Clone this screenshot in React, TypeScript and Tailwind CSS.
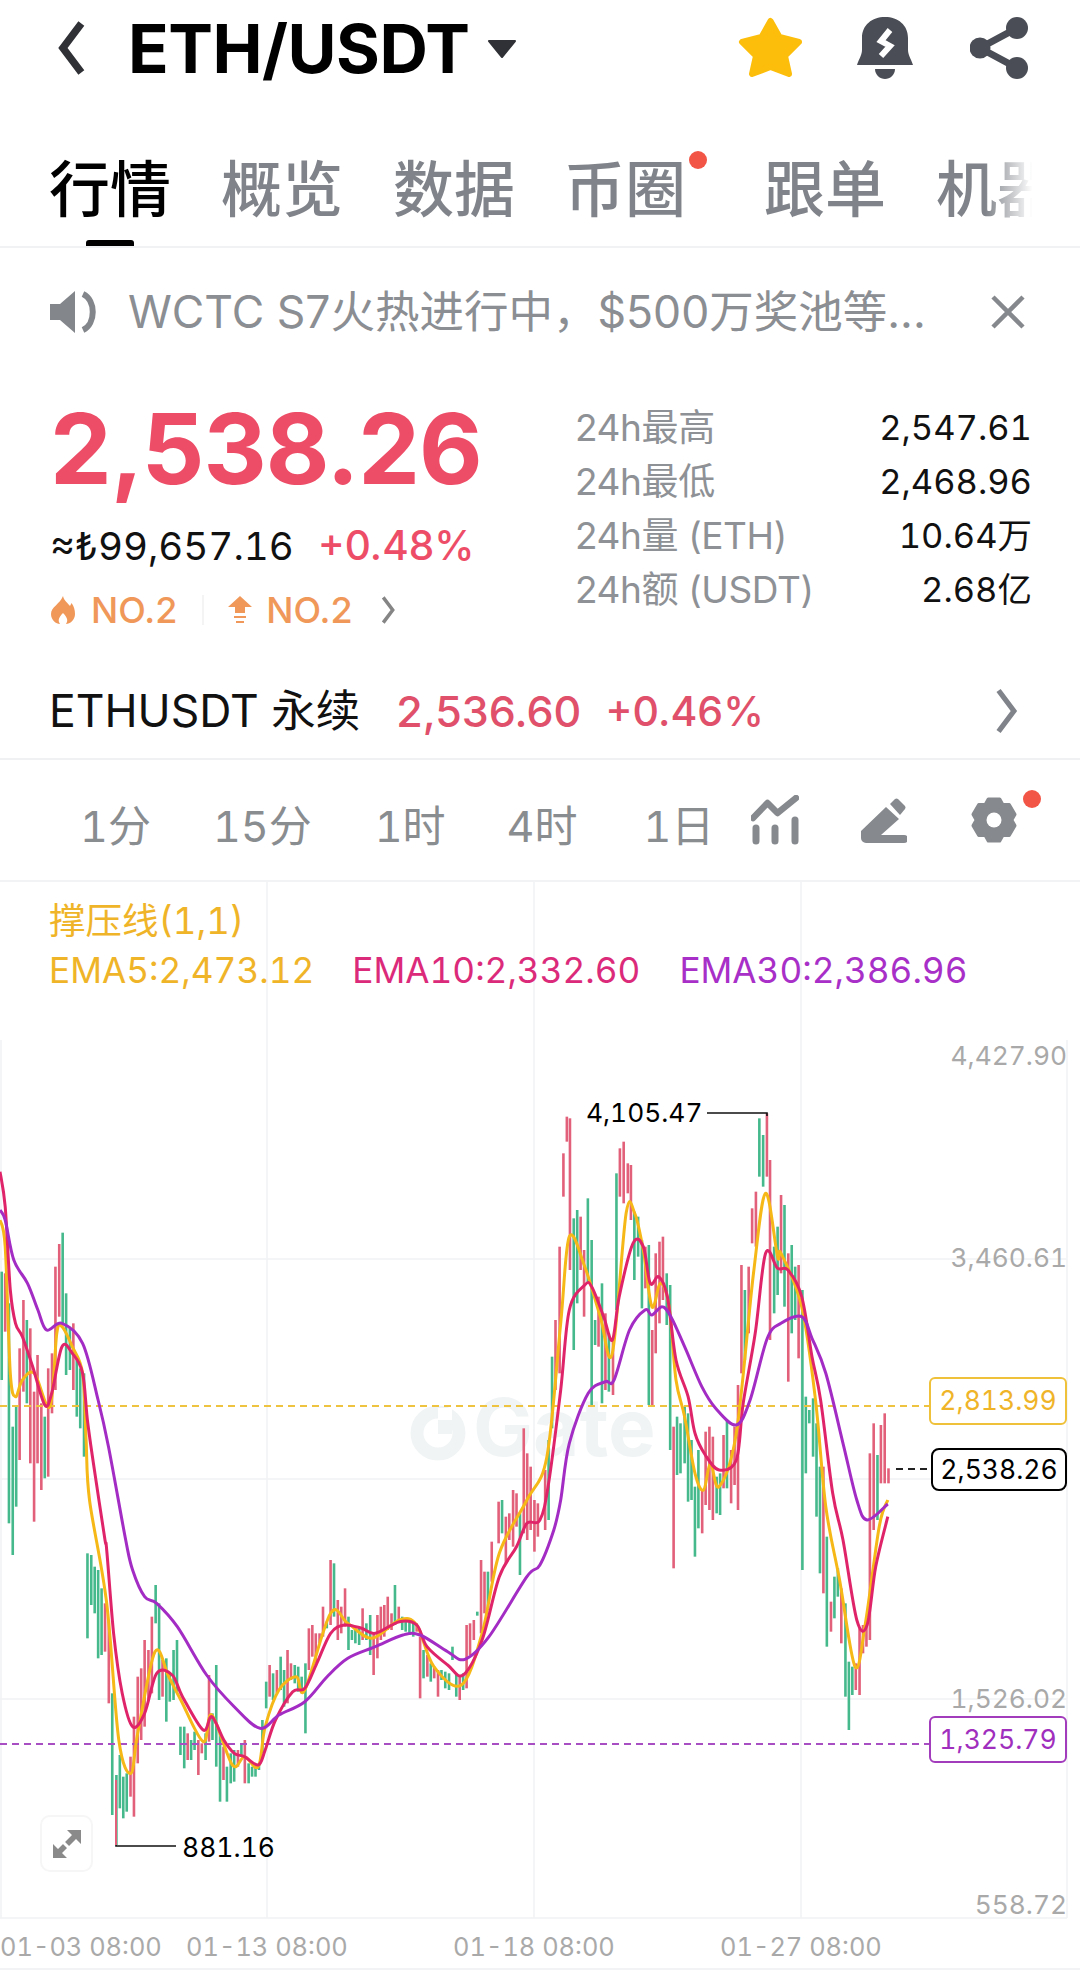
import React from "react";

type P = number[][];
const a = (p: P) => p.map(([x, y]) => [x / 2.904, 1040 + y / 3]);
const b = (p: P) => p.map(([x, y]) => [540 + x / 2.904, 1040 + y / 3]);
const c = (p: P) => p.map(([x, y]) => [x / 2.904, 1500 + y / 3]);
const d = (p: P) => p.map(([x, y]) => [540 + x / 2.904, 1500 + y / 3]);

const magenta = [
  ...a([[0,395],[15,500],[30,750],[45,850],[65,890],[95,980],[130,1095],[150,1060],[180,920],[210,940],[240,1000],[255,1150],[280,1330],[305,1500]]),
  ...c([[310,150],[330,400],[355,580],[385,680],[420,640],[455,520],[500,525],[530,590],[590,690],[615,650],[650,720],[680,760],[710,770],[750,795],[770,750],[800,660],[850,575],[885,565],[920,490],[960,400],[1000,375],[1050,385],[1090,400],[1160,365],[1210,375],[1240,440],[1300,495],[1345,525],[1400,420],[1450,230],[1500,140],[1530,70],[1568,60]]),
  ...b([[25,1330],[60,1050],[85,810],[130,735],[150,740],[185,830],[210,900],[230,770],[270,610],[300,620],[320,730],[345,710],[370,770],[395,960],[430,1070],[450,1180],[480,1245],[520,1290],[570,1260],[590,1090],[625,880],[655,640],[690,685],[720,690],[760,770],[790,950],[815,1080],[850,1360]]),
  ...d([[880,120],[920,360],[950,375],[975,200],[1010,50]]),
];
const purple = [
  ...a([[0,510],[15,540],[40,660],[80,730],[110,810],[135,870],[180,850],[240,910],[285,1080],[315,1220],[365,1500]]),
  ...c([[385,210],[420,290],[455,310],[515,380],[600,525],[680,620],[755,685],[810,645],[885,605],[950,530],[1010,475],[1090,440],[1170,405],[1220,405],[1300,455],[1350,478],[1420,410],[1530,230],[1568,195]]),
  ...d([[40,90],[60,0]]),
  ...b([[85,1210],[140,1060],[190,1025],[215,1020],[260,870],[305,810],[325,825],[355,800],[380,830],[420,920],[470,1040],[510,1105],[570,1155],[610,1080],[660,895],[700,850],[760,830],[790,895],[830,1000],[880,1210],[920,1380],[950,1440],[1010,1392]]),
];
const yellow = [
  ...a([[0,540],[15,620],[30,1000],[45,1070],[65,1020],[100,1000],[145,1100],[165,880],[180,860],[210,920],[240,1000],[250,1200]]),
  ...c([[260,0],[310,310],[345,720],[380,820],[400,700],[450,455],[490,530],[525,600],[590,725],[615,645],[675,795],[710,770],[750,800],[770,680],[810,570],[860,530],[885,570],[960,340],[1010,370],[1080,415],[1160,360],[1210,375],[1260,500],[1340,555],[1400,400],[1450,160],[1530,0]]),
  ...b([[20,1250],[60,850],[85,590],[130,680],[175,830],[210,940],[250,520],[275,520],[300,630],[325,800],[350,730],[375,800],[395,1020],[420,1130],[450,1300],[475,1350],[495,1270],[520,1340],[570,1180],[620,700],[655,460],[690,650],[700,640],[760,800],[800,1080],[830,1400]]),
  ...d([[870,240],[915,500],[945,370],[985,80],[1010,0]]),
];

const tops = [
  ...a([[5,695],[15,700],[26,790],[37,1160],[47,1100],[57,925],[68,780],[78,840],[88,865],[99,1055],[109,945],[120,1090],[130,1130],[140,985],[151,940],[161,680],[172,612],[182,578],[192,760],[203,860],[213,850],[223,950],[233,985],[244,1000]]),
  ...c([[254,160],[265,165],[275,200],[285,210],[295,265],[305,310],[316,360],[326,580],[338,825],[348,765],[358,830],[368,820],[379,770],[389,650],[400,530],[410,505],[420,420],[431,450],[441,350],[452,255],[462,310],[472,480],[483,475],[493,520],[504,450],[514,420],[524,680],[535,680],[545,700],[555,720],[565,695],[576,720],[586,730],[597,700],[607,525],[617,640],[628,495],[639,700],[649,740],[659,800],[670,760],[680,750],[691,750],[701,730],[711,720],[722,790],[732,800],[742,800],[752,790],[762,660],[773,545],[783,495],[793,520],[804,510],[815,470],[825,510],[835,450],[845,490],[856,495],[866,500],[876,530],[887,490],[897,385],[907,375],[917,400],[928,400],[938,320],[949,365],[960,180],[970,190],[981,300],[991,320],[1002,265],[1012,350],[1022,390],[1032,390],[1043,385],[1053,325],[1064,370],[1075,345],[1085,400],[1096,345],[1106,320],[1116,315],[1126,290],[1137,340],[1147,255],[1158,320],[1168,350],[1178,355],[1189,360],[1200,365],[1210,370],[1220,410],[1230,450],[1241,465],[1251,490],[1261,500],[1272,510],[1282,510],[1293,515],[1304,520],[1314,440],[1325,520],[1335,530],[1345,520],[1355,375],[1365,370],[1376,360],[1386,335],[1397,180],[1407,215],[1417,215],[1428,125]]),
  ...a([[1448,1385],[1458,1380],[1469,1430],[1479,1420],[1490,1350],[1500,1360],[1510,1420],[1521,1165],[1531,1240],[1541,1280],[1552,1380],[1562,1390]]),
  ...b([[15,1290],[25,1200],[35,950],[45,840],[57,620],[68,340],[78,230],[87,235],[98,535],[108,510],[118,530],[128,630],[139,475],[150,600],[160,840],[170,770],[180,730],[190,820],[200,880],[212,900],[222,400],[232,325],[243,305],[255,370],[264,375],[274,515],[285,530],[296,600],[306,620],[316,615],[326,870],[336,640],[347,605],[357,590],[368,700],[378,735],[388,1160],[398,1130],[408,1150],[420,1100],[430,1120],[440,1200],[450,1340],[460,1230],[471,1350],[481,1175],[492,1160],[502,1190],[513,1310],[523,1300],[533,1185],[543,1140],[555,1230],[565,1160],[575,1035],[585,675],[595,750],[606,680],[616,505],[627,455],[637,235],[648,285],[659,220],[668,360],[680,620],[690,560],[700,465],[710,495],[721,640],[731,615],[741,680],[751,675],[762,750],[772,1070],[782,1110],[793,1075],[803,1150],[813,1280],[823,1280]]),
  ...d([[833,110],[845,305],[855,230],[865,205],[875,265],[887,310],[897,485],[907,500],[917,490],[928,385],[938,375],[948,365]]),
  ...b([[958,1240],[969,1150],[980,1245],[990,1155],[1001,1120],[1012,1285]]),
];
const bottoms = [
  ...a([[5,1020],[15,875],[26,1450],[37,1545],[47,1400],[57,1260],[68,1055],[78,1090],[88,1270],[99,1445],[109,1270],[120,1350],[130,1315],[140,1310],[151,1120],[161,1050],[172,830],[182,850],[192,1005],[203,990],[213,1050],[223,1130],[233,1165],[244,1250]]),
  ...c([[254,415],[265,315],[275,340],[285,475],[295,465],[305,455],[316,610],[326,945],[338,1035],[347,925],[358,955],[368,935],[379,890],[389,950],[400,790],[410,720],[420,680],[431,600],[441,580],[452,370],[462,600],[472,590],[483,665],[493,605],[504,600],[514,575],[524,765],[535,805],[545,780],[555,780],[565,750],[576,825],[586,760],[597,780],[607,725],[617,720],[628,800],[639,905],[649,840],[659,905],[670,850],[680,845],[691,800],[701,770],[711,850],[722,850],[732,830],[742,830],[752,810],[762,760],[773,625],[783,590],[793,600],[804,580],[815,570],[825,620],[835,610],[845,540],[856,550],[866,575],[876,580],[887,700],[897,510],[907,470],[917,490],[928,430],[938,410],[949,385],[960,375],[970,350],[981,420],[991,400],[1002,380],[1012,450],[1022,420],[1032,430],[1043,435],[1053,420],[1064,420],[1075,465],[1085,525],[1096,475],[1106,420],[1116,410],[1126,390],[1137,390],[1147,375],[1158,360],[1168,390],[1178,395],[1189,405],[1200,410],[1210,395],[1220,595],[1230,535],[1241,530],[1251,545],[1261,535],[1272,590],[1282,540],[1293,565],[1304,570],[1314,480],[1325,590],[1335,600],[1345,570],[1355,565],[1365,465],[1376,420],[1386,330],[1397,400],[1407,340],[1417,330],[1428,245],[1438,230],[1448,130],[1458,100],[1470,190],[1480,120],[1490,140],[1500,80],[1510,225],[1520,100],[1530,120],[1541,90],[1552,155],[1562,110]]),
  ...d([[15,90],[25,60]]),
  ...b([[35,1165],[45,1050],[57,1000],[68,470],[78,305],[87,690],[98,930],[108,790],[118,690],[128,830],[139,730],[150,1095],[160,915],[170,920],[180,1090],[190,1050],[200,1055],[212,1065],[222,810],[232,470],[243,490],[254,460],[264,540],[274,720],[285,650],[296,805],[306,745],[316,1095],[326,1095],[336,940],[347,850],[357,780],[368,855],[378,1230]]),
  ...d([[388,205]]),
  ...b([[398,1305],[408,1300],[420,1270],[430,1385],[441,1380]]),
  ...d([[452,170],[462,85],[472,100]]),
  ...b([[481,1395],[492,1410]]),
  ...d([[502,60],[513,40],[523,45]]),
  ...b([[533,1345],[543,1345],[555,1390],[565,1335]]),
  ...d([[575,30]]),
  ...b([[585,1000],[595,960],[606,880],[616,610],[627,620],[637,410],[648,440],[659,410],[668,900],[680,820],[690,765],[700,700],[710,800],[721,1025],[731,880],[741,840],[751,955]]),
  ...d([[762,210]]),
  ...b([[772,1300],[782,1150],[793,1250]]),
  ...d([[803,50],[813,220],[825,280],[835,440],[845,395],[855,355],[865,290],[876,430],[886,590],[897,690],[907,585],[917,570],[928,585],[938,460],[949,440],[959,420],[969,90],[980,60]]),
  ...b([[990,1330],[1001,1330],[1012,1330]]),
];

const nearest = (arr: P, x: number) => {
  let best = arr[0];
  for (const p of arr) if (Math.abs(p[0] - x) < Math.abs(best[0] - x)) best = p;
  return best;
};
const rnd = (i: number) => {
  const v = Math.sin(i * 12.9898) * 43758.5453;
  return v - Math.floor(v);
};
const smooth = (l: P) => {
  let s = `M${l[0][0].toFixed(1)} ${l[0][1].toFixed(1)}`;
  for (let i = 0; i < l.length - 1; i++) {
    const p0 = l[Math.max(i - 1, 0)];
    const p1 = l[i];
    const p2 = l[i + 1];
    const p3 = l[Math.min(i + 2, l.length - 1)];
    const c1 = [p1[0] + (p2[0] - p0[0]) / 6, p1[1] + (p2[1] - p0[1]) / 6];
    const c2 = [p2[0] - (p3[0] - p1[0]) / 6, p2[1] - (p3[1] - p1[1]) / 6];
    s += `C${c1[0].toFixed(1)} ${c1[1].toFixed(1)} ${c2[0].toFixed(1)} ${c2[1].toFixed(1)} ${p2[0].toFixed(1)} ${p2[1].toFixed(1)}`;
  }
  return s;
};

const gearPoints = () => {
  const out: string[] = [];
  for (let i = 0; i < 6; i++) {
    const t = -90 + i * 60;
    [[t - 15, 21.5], [t + 15, 21.5], [t + 30, 17.5]].forEach(([deg, r]) => {
      const rad = (deg * Math.PI) / 180;
      out.push(`${(23 + r * Math.cos(rad)).toFixed(2)},${(25 + r * Math.sin(rad)).toFixed(2)}`);
    });
  }
  return out.join(" ");
};

function Chart() {
  return (
    <svg className="absolute left-0 top-0" width="1080" height="1089" viewBox="0 882 1080 1089">
      {[1259, 1479, 1699, 1918].map((y) => (
        <line key={y} x1="0" x2="1067" y1={y} y2={y} stroke="#f1f2f3" strokeWidth="1.5" />
      ))}
      {[267, 534, 801].map((x) => (
        <line key={x} x1={x} x2={x} y1="882" y2="1918" stroke="#f1f2f3" strokeWidth="1.5" />
      ))}
      {[1, 1067].map((x) => (
        <line key={x} x1={x} x2={x} y1="1040" y2="1918" stroke="#f1f2f3" strokeWidth="1.5" />
      ))}
      <g>
        <circle cx="438" cy="1433" r="21" fill="none" stroke="#f1f4f5" strokeWidth="13" />
        <rect x="438" y="1408" width="14" height="24" fill="#ffffff" />
        <rect x="438" y="1420" width="14" height="14" fill="#f1f4f5" />
      </g>
      {tops.map((t, i) => {
        const bot = nearest(bottoms, t[0])[1];
        const s = nearest(yellow, t[0] + 6)[1] - nearest(yellow, t[0] - 6)[1];
        const green = rnd(i) < (s > 0 ? 0.74 : 0.3);
        return (
          <rect key={i} x={t[0] - 1.3} y={t[1]} width="2.6" height={Math.max(bot - t[1], 4)} fill={green ? "#45b88c" : "#e2607a"} />
        );
      })}
      <line x1="0" x2="929" y1="1406" y2="1406" stroke="#eec33f" strokeWidth="1.8" strokeDasharray="7 5" />
      <line x1="0" x2="929" y1="1744" y2="1744" stroke="#a84fc4" strokeWidth="1.8" strokeDasharray="7 5" />
      <line x1="896" x2="927" y1="1469" y2="1469" stroke="#222" strokeWidth="1.8" strokeDasharray="7 5" />
      <path d={smooth(yellow)} fill="none" stroke="#f5b816" strokeWidth="3" strokeLinejoin="round" />
      <path d={smooth(magenta)} fill="none" stroke="#e0246a" strokeWidth="3" strokeLinejoin="round" />
      <path d={smooth(purple)} fill="none" stroke="#a32cc4" strokeWidth="3" strokeLinejoin="round" />
      <polyline points="707,1113 767,1113 767,1116" fill="none" stroke="#111" strokeWidth="1.6" />
      <polyline points="116,1780 116,1846 176,1846" fill="none" stroke="#111" strokeWidth="1.6" />
      <line x1="116" x2="116" y1="1780" y2="1845" stroke="#e2607a" strokeWidth="2" />
    </svg>
  );
}

const Chevron = ({ cls, sw = 4 }: { cls: string; sw?: number }) => (
  <svg className={cls} viewBox="0 0 20 40" fill="none">
    <path d="M4 4 L16 20 L4 36" stroke="currentColor" strokeWidth={sw} strokeLinecap="square" />
  </svg>
);

function TopIcons() {
  return (
    <div className="ml-auto mr-[52px] flex items-center">
      <svg width="65" height="62" viewBox="0 0 65 62">
        <path d="M32.5 4 L41.5 20 L61 25 L47 39 L51 57 L32.5 50 L14 57 L18 39 L4 25 L23.5 20 Z" fill="#fdbd0b" stroke="#fdbd0b" strokeWidth="6" strokeLinejoin="round" />
      </svg>
      <svg className="ml-[54px]" width="56" height="62" viewBox="0 0 56 62">
        <path d="M28 0 C41 0 51 8 51 21 L51 33 C51 38 55 44 56 48 L0 48 C1 44 5 38 5 33 L5 21 C5 8 15 0 28 0 Z" fill="#4a4d55" />
        <path d="M18 52 H38 C38 58 33 62 28 62 C23 62 18 58 18 52 Z" fill="#4a4d55" />
        <polyline points="33,13 24,24 33,29 24,39" fill="none" stroke="#ffffff" strokeWidth="6" />
      </svg>
      <svg className="ml-[57px]" width="58" height="62" viewBox="0 0 58 62" fill="none">
        <path d="M47 11 L10 31 L47 51" stroke="#4a4d55" strokeWidth="7" />
        <circle cx="47" cy="11" r="11" fill="#4a4d55" />
        <circle cx="10" cy="31" r="10.5" fill="#4a4d55" />
        <circle cx="47" cy="51" r="11" fill="#4a4d55" />
      </svg>
    </div>
  );
}

const StatRow = ({ k, v }: { k: string; v: string }) => (
  <div className="flex h-[54px] items-center justify-between">
    <span className="text-[37px] tracking-[-0.4px] text-[#8e9195]">{k}</span>
    <span className="text-[34.5px] text-[#111] tabular-nums">{v}</span>
  </div>
);

export default function App() {
  return (
    <div className="h-[1971px] w-[1080px] overflow-hidden bg-white font-['Inter','Noto_Sans_CJK_SC',sans-serif]">
      <header className="flex h-[96px] items-center pl-[55px]">
        <Chevron cls="h-[54px] w-[32px] rotate-180 text-[#2f3136]" sw={5.5} />
        <span className="ml-[41px] text-[67px] leading-none font-bold tracking-[-0.5px] text-black">ETH/USDT</span>
        <svg className="ml-[18px] mt-[2px]" width="30" height="20" viewBox="0 0 30 20">
          <path d="M2 2 H28 L15 18 Z" fill="#2f3136" stroke="#2f3136" strokeWidth="2" strokeLinejoin="round" />
        </svg>
        <TopIcons />
      </header>

      <nav className="relative flex h-[152px] items-start overflow-hidden border-b-2 border-[#f0f2f4] pl-[49px] pt-[64px] text-[61px] leading-[60px] text-[#80848a]">
        <span className="relative shrink-0 font-medium text-black">
          行情
          <span className="absolute left-[37px] top-[80px] h-[8px] w-[48px] rounded-t-[3px] bg-black" />
        </span>
        <span className="ml-[50px] shrink-0 font-medium">概览</span>
        <span className="ml-[50px] shrink-0 font-medium">数据</span>
        <span className="relative ml-[49px] shrink-0 font-medium">
          币圈
          <span className="absolute left-[125px] top-[-9px] h-[18px] w-[18px] rounded-full bg-[#f25546]" />
        </span>
        <span className="ml-[78px] shrink-0 font-medium">跟单</span>
        <span className="ml-[50px] shrink-0 font-medium">机器</span>
        <span className="absolute left-[985px] top-0 h-full w-[95px] bg-gradient-to-r from-white/0 via-white to-white" />
      </nav>

      <section className="relative flex h-[130px] items-center pb-[2px] pl-[50px]">
        <svg width="50" height="44" viewBox="0 0 50 44" fill="none">
          <path d="M0 14 H10 L25 1 V43 L10 30 H0 Z" fill="#83868b" />
          <path d="M33 4 C46 10 46 34 33 40" stroke="#83868b" strokeWidth="6" />
        </svg>
        <span className="ml-[28px] text-[44.5px] leading-none whitespace-nowrap text-[#8b8e92]">WCTC S7火热进行中，$500万奖池等...</span>
        <svg className="absolute left-[990px]" width="36" height="36" viewBox="0 0 36 36">
          <path d="M3 3 L33 33 M33 3 L3 33" stroke="#85888c" strokeWidth="4.5" />
        </svg>
      </section>

      <section className="flex h-[270px] pl-[50px] pr-[48px]">
        <div className="w-[525px]">
          <div className="mt-[21px] text-[98px] leading-[100px] font-bold tracking-[-1px] text-[#ee4d68]">2,538.26</div>
          <div className="mt-[24px] flex items-center leading-[46px]">
            <span className="text-[38.6px] text-[#111] tabular-nums">≈₺99,657.16</span>
            <span className="ml-[24px] text-[40.5px] font-medium text-[#ee4d68]">+0.48%</span>
          </div>
          <div className="mt-[19px] flex items-center text-[36px] leading-[44px] text-[#f0985a]">
            <svg className="ml-[1px]" width="24" height="28" viewBox="0 0 24 28">
              <path d="M12 0 C13 5 17 7 19 10 C20 8 20.5 7 20.5 7 C23 10 24 14 24 18 C24 24 19 28 15 28 C17 25 17 22 12 17 C7 22 7 25 9 28 C5 28 0 24 0 18 C0 11 9 8 12 0Z" fill="#f0985a" />
            </svg>
            <span className="ml-[16px] font-medium">NO.2</span>
            <span className="ml-[25px] h-[30px] w-[2px] bg-[#f4f4f4]" />
            <svg className="ml-[24px]" width="24" height="28" viewBox="0 0 24 28">
              <path d="M12 0 L24 11 H17 V17 H7 V11 H0 Z M6 20 H18 V22 H6 Z M8 25 H16 V27 H8 Z" fill="#f0985a" />
            </svg>
            <span className="ml-[14px] font-medium">NO.2</span>
            <Chevron cls="ml-[27px] h-[28px] w-[17px] text-[#858585]" sw={5} />
          </div>
        </div>
        <div className="flex-1 pt-[23px]">
          <StatRow k="24h最高" v="2,547.61" />
          <StatRow k="24h最低" v="2,468.96" />
          <StatRow k="24h量 (ETH)" v="10.64万" />
          <StatRow k="24h额 (USDT)" v="2.68亿" />
        </div>
      </section>

      <section className="flex h-[112px] items-center border-b-2 border-[#f0f1f2] pl-[49px] pr-[60px] pt-[16px] leading-none">
        <span className="text-[44.5px] whitespace-nowrap text-[#111]">ETHUSDT 永续</span>
        <span className="ml-[36px] text-[43px] font-medium text-[#e0506a]">2,536.60</span>
        <span className="ml-[24px] text-[41px] font-medium text-[#e0506a]">+0.46%</span>
        <Chevron cls="ml-auto h-[46px] w-[26px] text-[#80848a]" sw={4.5} />
      </section>

      <section className="relative flex h-[122px] items-center border-b-2 border-[#f2f3f4] text-[43px] leading-none text-[#8a8d90] tabular-nums">
        <span className="ml-[80px] mt-[12px]">1分</span>
        <span className="ml-[62px] mt-[12px]">15分</span>
        <span className="ml-[63px] mt-[12px]">1时</span>
        <span className="ml-[61px] mt-[12px]">4时</span>
        <span className="ml-[66px] mt-[12px]">1日</span>
        <svg className="ml-[37px]" width="48" height="50" viewBox="0 0 48 50" fill="none">
          <polyline points="2,23 16.5,8 26.5,18 45,3" stroke="#86898d" strokeWidth="6.5" strokeLinecap="round" strokeLinejoin="round" />
          <path d="M5 33 V46 M24 33 V46 M44 25 V46" stroke="#86898d" strokeWidth="7" strokeLinecap="round" />
        </svg>
        <svg className="ml-[62px]" width="46" height="47" viewBox="0 0 46 47">
          <path d="M0 34 L25 10 L38 22 L20 38 H43 A4 4 0 0 1 43 46 H5 A5 5 0 0 1 0 41 Z" fill="#86898d" />
          <path d="M29 7 L34 2 A2.5 2.5 0 0 1 37 2 L44 9 A2.5 2.5 0 0 1 44 12 L39 18 Z" fill="#86898d" />
        </svg>
        <svg className="ml-[64px]" width="46" height="50" viewBox="0 0 46 50">
          <polygon points={gearPoints()} fill="#86898d" stroke="#86898d" strokeWidth="3.5" strokeLinejoin="round" />
          <circle cx="23" cy="25" r="7.5" fill="#ffffff" />
        </svg>
        <span className="absolute left-[1023px] top-[30px] h-[18px] w-[18px] rounded-full bg-[#f25546]" />
      </section>

      <section className="relative h-[1089px]">
        <span className="absolute left-[473px] top-[505px] text-[80px] leading-none font-bold text-[#f1f4f5]">Gate</span>
        <Chart />
        <div className="relative pl-[49px] pt-[16px] leading-[46px] tabular-nums">
          <div className="text-[36.5px] text-[#f0b429]">撑压线(1,1)</div>
          <div className="mt-[3px] flex text-[35.2px] whitespace-nowrap">
            <span className="text-[#f0b429]">EMA5:2,473.12</span>
            <span className="ml-[38px] text-[#dc2a7a]">EMA10:2,332.60</span>
            <span className="ml-[39px] text-[#a82fc7]">EMA30:2,386.96</span>
          </div>
        </div>

        <div className="text-[26.3px] leading-none text-[#a9a9a9] tabular-nums">
          <span className="absolute right-[13px] top-[161px]">4,427.90</span>
          <span className="absolute right-[13px] top-[363px]">3,460.61</span>
          <span className="absolute right-[13px] top-[804px]">1,526.02</span>
          <span className="absolute right-[13px] top-[1010px]">558.72</span>
        </div>

        <span className="absolute left-[586px] top-[216px] text-[26.3px] leading-[30px] text-black tabular-nums">4,105.47</span>
        <span className="absolute left-[182px] top-[950px] text-[26.5px] leading-[30px] text-black tabular-nums">881.16</span>

        <span className="absolute left-[929px] top-[495px] flex h-[48px] w-[138px] items-center justify-center rounded-[6px] border-2 border-[#efc13a] bg-white text-[26.5px] text-[#f0b429] tabular-nums">2,813.99</span>
        <span className="absolute left-[931px] top-[566px] flex h-[43px] w-[136px] items-center justify-center rounded-[8px] border-2 border-black bg-white text-[26.5px] text-black tabular-nums">2,538.26</span>
        <span className="absolute left-[929px] top-[834px] flex h-[47px] w-[138px] items-center justify-center rounded-[6px] border-2 border-[#a23cbd] bg-white text-[26.5px] text-[#a02fbd] tabular-nums">1,325.79</span>

        <div className="absolute left-[40px] top-[933px] flex h-[57px] w-[53px] items-center justify-center rounded-[10px] border-2 border-[#f6f6f6]">
          <svg width="28" height="28" viewBox="0 0 28 28" fill="#8a8a8a">
            <path d="M28 0 V14 L23 9 L9 23 L14 28 H0 V14 L5 19 L19 5 L14 0 Z" />
            <path d="M10.5 12.5 L15.5 17.5" stroke="#fff" strokeWidth="3" />
          </svg>
        </div>

        <div className="absolute left-0 top-[1036px] h-[52px] w-full border-b-2 border-[#f2f3f4] text-[25.4px] leading-[58px] text-[#a9a9a9] tabular-nums">
          <span className="absolute left-[0px]">01-03 08:00</span>
          <span className="absolute left-[186px]">01-13 08:00</span>
          <span className="absolute left-[453px]">01-18 08:00</span>
          <span className="absolute left-[720px]">01-27 08:00</span>
        </div>
      </section>
    </div>
  );
}
